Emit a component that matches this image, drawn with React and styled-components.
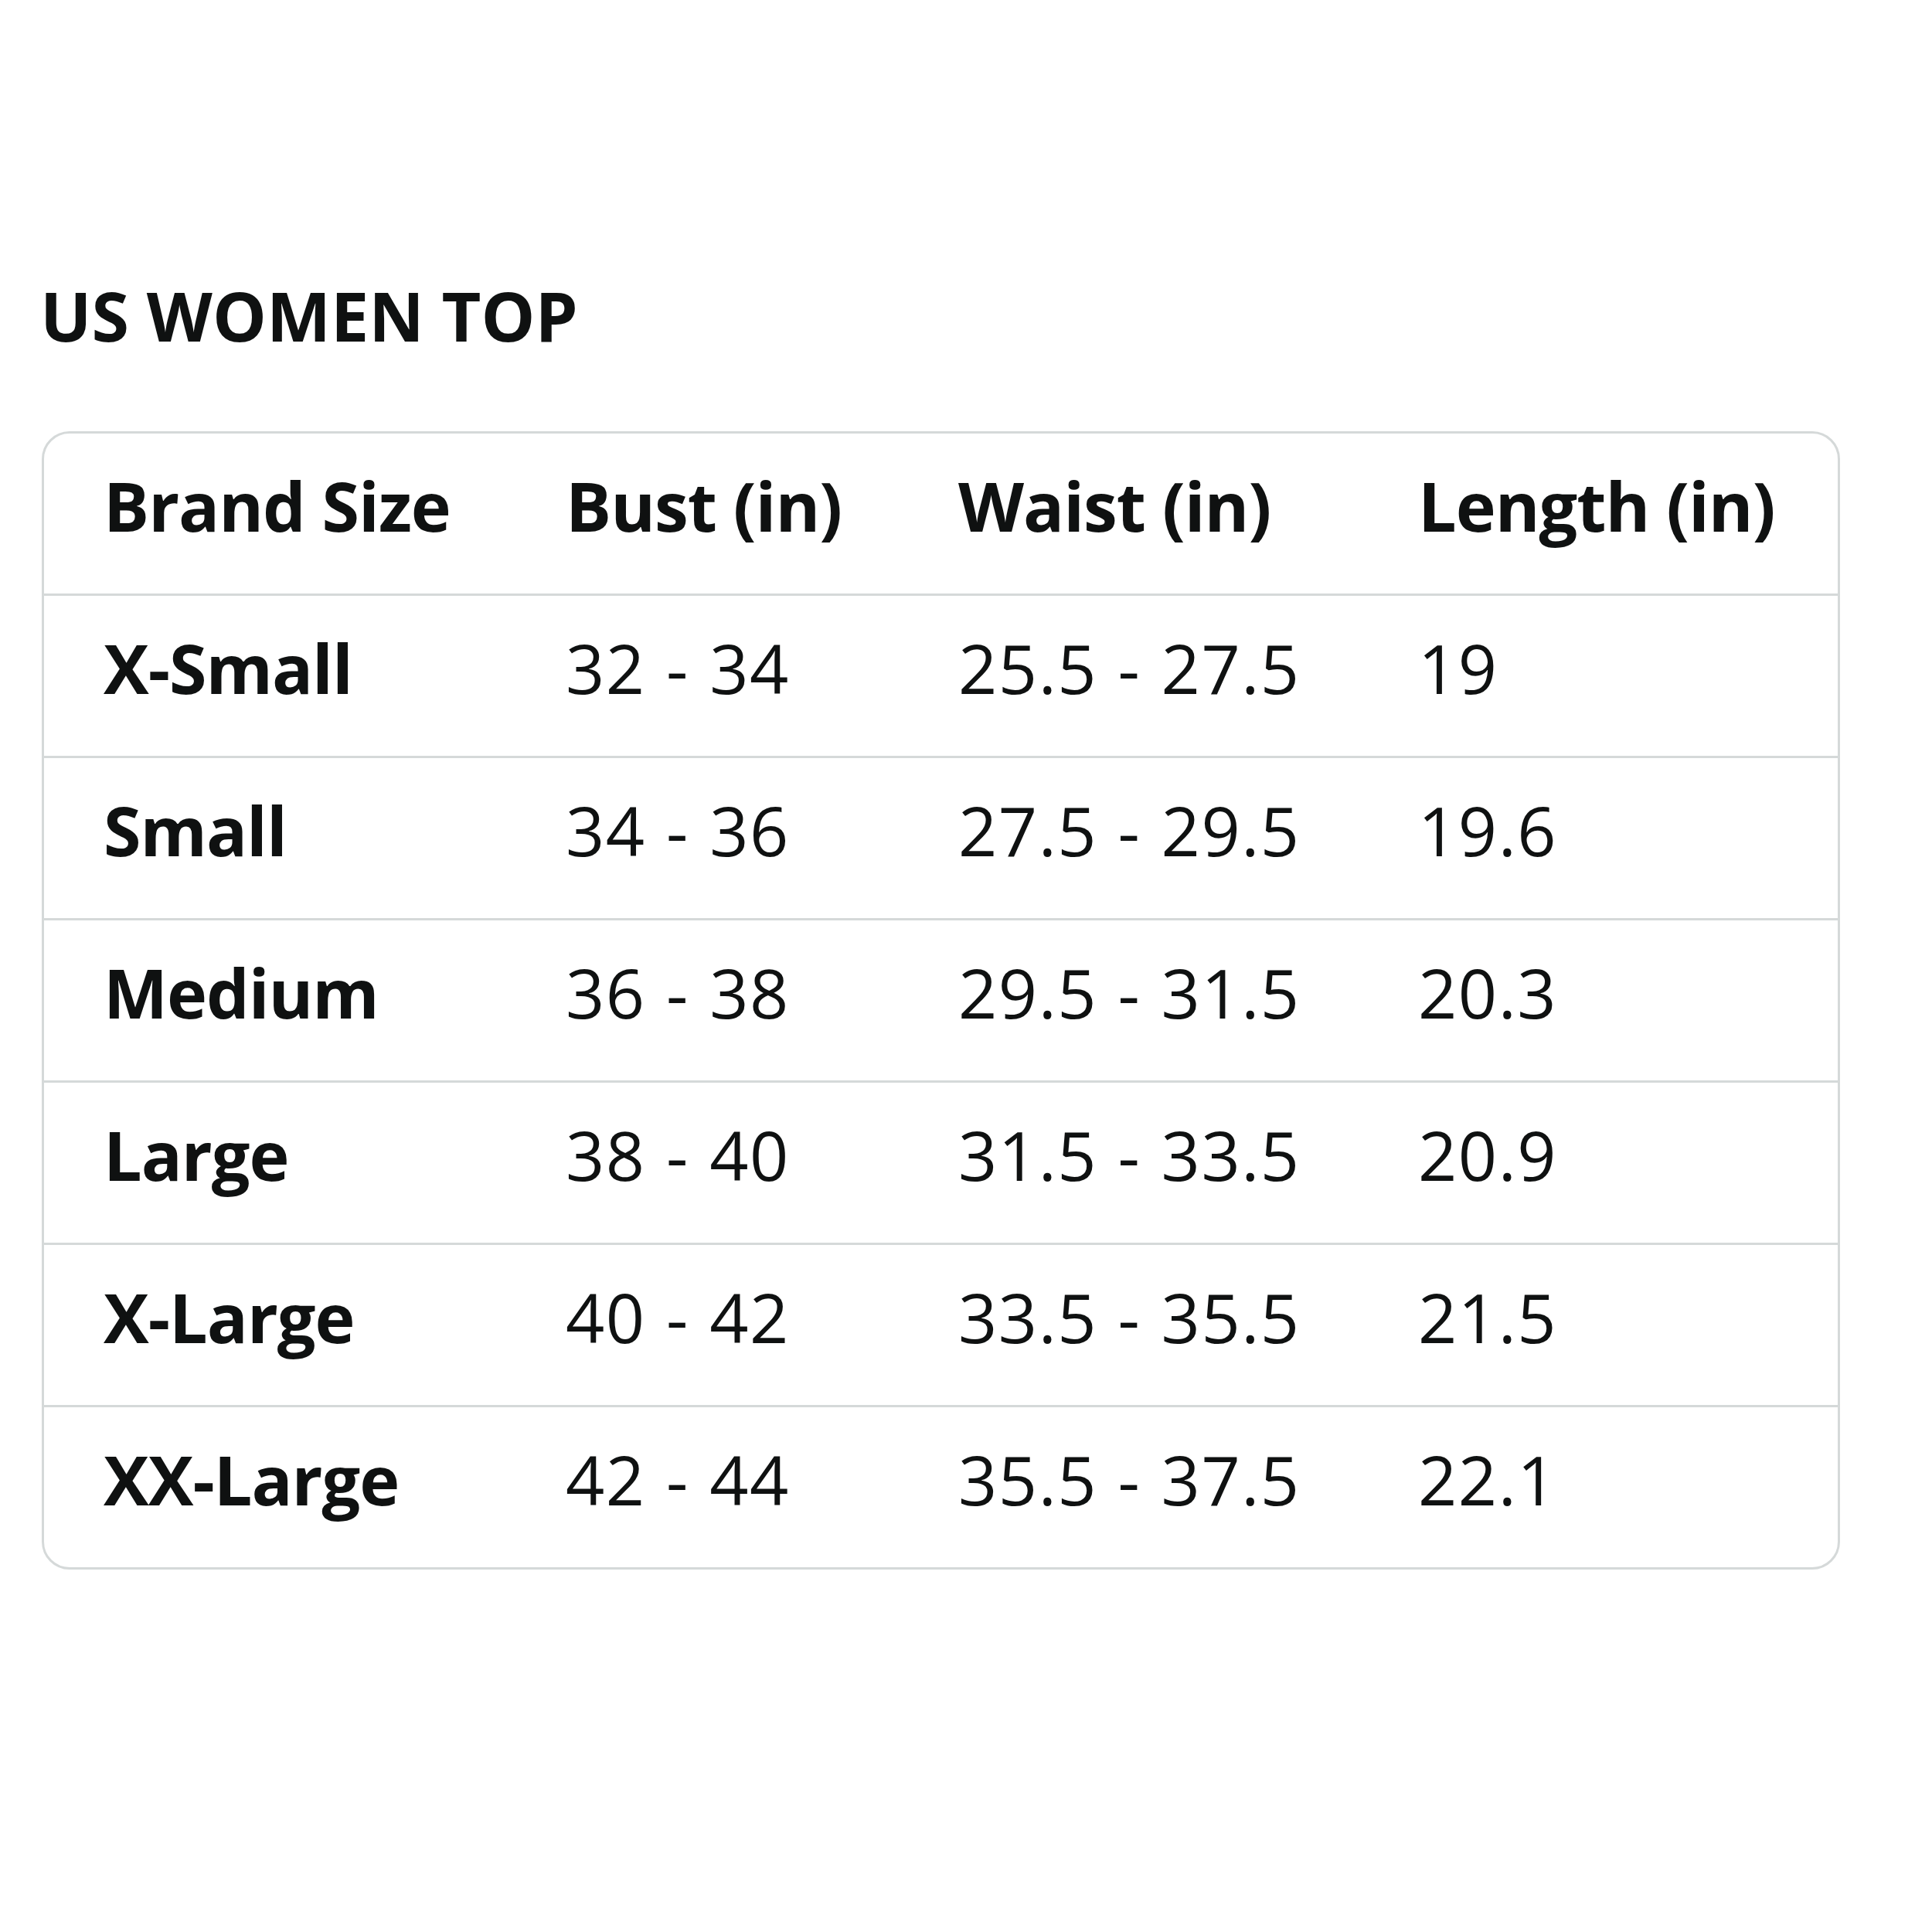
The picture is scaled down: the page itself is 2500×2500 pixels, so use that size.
import React from "react";
import styled, { createGlobalStyle } from "styled-components";

const GlobalStyle = createGlobalStyle`
  html, body {
    margin: 0;
    padding: 0;
    background: #ffffff;
  }
  body {
    font-family: "Open Sans", "Noto Sans", "Liberation Sans", sans-serif;
    color: #0f1111;
  }
`;

const Page = styled.div`
  width: 2500px;
  min-height: 2500px;
  box-sizing: border-box;
  padding: 364px 0 0 52px;
`;

const Title = styled.h2`
  margin: 0 0 106px 0;
  font-size: 88px;
  line-height: 88px;
  font-weight: 700;
`;

const Chart = styled.div`
  width: 2321px;
  border: 3px solid #d5d9d9;
  border-radius: 36px;
  overflow: hidden;
  margin-left: 2px;
`;

const Row = styled.div`
  display: grid;
  grid-template-columns: 598px 508px 595px 1fr;
  padding: 49px 0 70px 77px;
  border-bottom: ${(p) => (p.$last ? "none" : "3px solid #d5d9d9")};
`;

const Cell = styled.div`
  font-size: 88px;
  line-height: 88px;
  white-space: nowrap;
  font-weight: ${(p) => (p.$bold ? 700 : 400)};
  letter-spacing: ${(p) => (p.$bold ? "-1px" : "1.5px")};
  word-spacing: ${(p) => (p.$bold ? "0" : "2px")};
`;

const header = ["Brand Size", "Bust (in)", "Waist (in)", "Length (in)"];

const sizes = [
  ["X-Small", "32 - 34", "25.5 - 27.5", "19"],
  ["Small", "34 - 36", "27.5 - 29.5", "19.6"],
  ["Medium", "36 - 38", "29.5 - 31.5", "20.3"],
  ["Large", "38 - 40", "31.5 - 33.5", "20.9"],
  ["X-Large", "40 - 42", "33.5 - 35.5", "21.5"],
  ["XX-Large", "42 - 44", "35.5 - 37.5", "22.1"],
];

export default function App() {
  return (
    <>
      <GlobalStyle />
      <Page>
        <Title>US WOMEN TOP</Title>
        <Chart>
          <Row>
            {header.map((h) => (
              <Cell key={h} $bold>
                {h}
              </Cell>
            ))}
          </Row>
          {sizes.map((row, i) => (
            <Row key={row[0]} $last={i === sizes.length - 1}>
              {row.map((value, j) => (
                <Cell key={j} $bold={j === 0}>
                  {value}
                </Cell>
              ))}
            </Row>
          ))}
        </Chart>
      </Page>
    </>
  );
}
